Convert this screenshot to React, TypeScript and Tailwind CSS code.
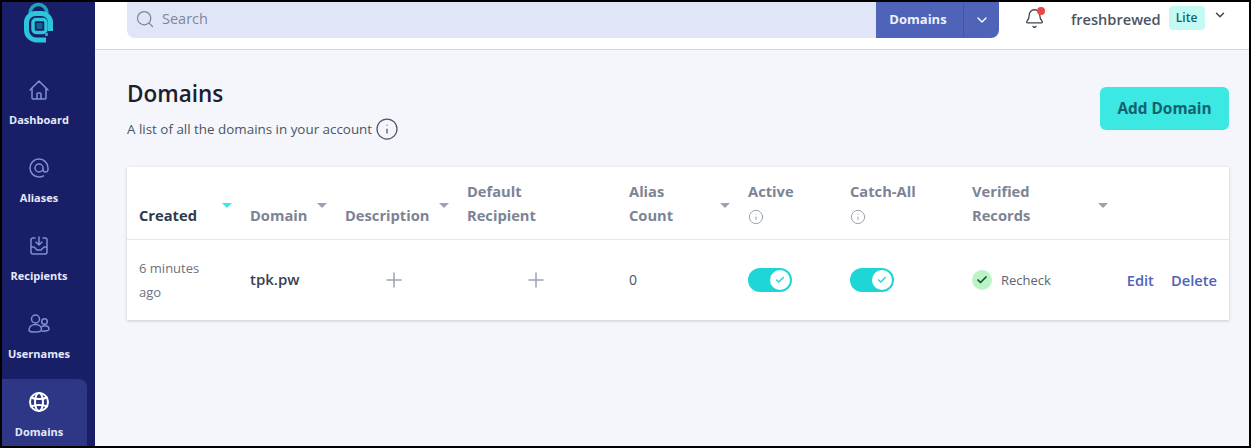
import { Bell, ChevronDown, Check, Plus, Search, Info } from "lucide-react";

const font = "font-['Open_Sans','Noto_Sans',sans-serif]";

function LogoMark() {
  return (
    <svg width="32" height="41" viewBox="0 0 32 41" fill="none">
      <path d="M7 11A8.5 8.5 0 0 1 24 11" stroke="#1aa5b8" strokeWidth="3.5" />
      <path d="M23 38H13A10 10 0 0 1 3.500 28V20A9 9 0 0 1 12.500 11.500h6A9 9 0 0 1 27.500 20v9" stroke="#2bc6da" strokeWidth="5" />
      <rect x="10" y="17.500" width="13" height="13" rx="3" stroke="#2bc6da" strokeWidth="3.5" />
      <path d="M22 32.500h3" stroke="#1aa5b8" strokeWidth="3" />
      <rect x="13.500" y="21" width="6" height="6" fill="#14648a" />
    </svg>
  );
}

function NavIcon({ name }: { name: string }) {
  const cls = name === "Domains" ? "text-white" : "text-[#7f8fd6]";
  const props = { width: 24, height: 24, viewBox: "0 0 24 24", fill: "none", stroke: "currentColor", strokeWidth: name === "Domains" ? 2 : 1.5, strokeLinecap: "round" as const, strokeLinejoin: "round" as const, className: cls };
  if (name === "Dashboard")
    return <svg {...props}><path d="M3 12l2-2m0 0l7-7 7 7M5 10v10a1 1 0 001 1h3m10-11l2 2m-2-2v10a1 1 0 01-1 1h-3m-6 0a1 1 0 001-1v-4a1 1 0 011-1h2a1 1 0 011 1v4a1 1 0 001 1m-6 0h6" /></svg>;
  if (name === "Aliases")
    return <svg {...props}><path d="M16 12a4 4 0 10-8 0 4 4 0 008 0zm0 0v1.5a2.5 2.5 0 005 0V12a9 9 0 10-9 9m4.5-1.206a8.959 8.959 0 01-4.5 1.207" /></svg>;
  if (name === "Recipients")
    return <svg {...props}><path d="M8 4H6a2 2 0 00-2 2v12a2 2 0 002 2h12a2 2 0 002-2V6a2 2 0 00-2-2h-2m-4-1v8m0 0l3-3m-3 3L9 8m-5 5h2.586a1 1 0 01.707.293l2.414 2.414a1 1 0 00.707.293h3.172a1 1 0 00.707-.293l2.414-2.414a1 1 0 01.707-.293H20" /></svg>;
  if (name === "Usernames")
    return (
      <svg {...props}>
        <circle cx="8.500" cy="7" r="4" />
        <circle cx="17.500" cy="9.500" r="2.800" />
        <path d="M2 18c0-3.500 3-5.500 6.500-5.500s6 2 6 5c0 2-2 2.500-6 2.500S2 20 2 18z" />
        <path d="M15 14.500c3-1.500 7-.5 7 2.500 0 1.800-2 2.200-6.500 2.200" />
      </svg>
    );
  return (
    <svg {...props}>
      <circle cx="12" cy="12" r="9" />
      <ellipse cx="12" cy="12" rx="4" ry="9" />
      <path d="M4 7.500c4 2 12 2 16 0M4 16.500c4-2 12-2 16 0" />
    </svg>
  );
}

function NavItem({ name, active }: { name: string; active?: boolean }) {
  return (
    <div className={`flex h-[78px] w-[85px] flex-col items-center pt-[11px] pr-[11px] ${active ? "rounded-tr-lg bg-[#2d3785]" : ""}`}>
      <NavIcon name={name} />
      <span className="mt-[10px] text-[11px] leading-4 font-bold whitespace-nowrap text-[#e5e9fb]">{name}</span>
    </div>
  );
}

function Sort({ on }: { on?: boolean }) {
  return (
    <span className={`mb-[19px] block h-0 w-0 border-x-[5px] border-t-[5px] border-x-transparent ${on ? "border-t-[#3be8e2]" : "border-t-[#9aa3b2]"}`} />
  );
}

function Toggle() {
  return (
    <span className="flex h-6 w-11 items-center justify-end rounded-full bg-[#1ed6d6] pr-[2px]">
      <span className="flex h-5 w-5 items-center justify-center rounded-full bg-white">
        <Check size={10} strokeWidth={3.5} className="text-[#1ed6d6]" />
      </span>
    </span>
  );
}

const cols = "grid-cols-[111px_95px_122px_162px_119px_102px_122px_1fr]";

export default function App() {
  return (
    <div className={`flex h-[448px] w-[1251px] overflow-hidden border-2 border-black bg-[#f5f6fb] ${font}`}>
      <aside className="flex w-[93px] shrink-0 flex-col bg-[#191f66]">
        <div className="h-[46px] shrink-0 pl-[21px]">
          <LogoMark />
        </div>
        <nav className="mt-[19px] flex flex-col">
          <NavItem name="Dashboard" />
          <NavItem name="Aliases" />
          <NavItem name="Recipients" />
          <NavItem name="Usernames" />
          <NavItem name="Domains" active />
        </nav>
      </aside>

      <div className="flex min-w-0 flex-1 flex-col">
        <header className="flex h-[48px] shrink-0 items-start border-b border-[#d5d7dc] bg-white pl-8">
          <div className="flex h-9 w-[872px] overflow-hidden rounded-b-lg">
            <div className="flex flex-1 items-center gap-[7px] bg-[#e0e6f8] pb-[2px] pl-2 text-[#7d8699]">
              <Search size={20} strokeWidth={1.5} />
              <span className="text-[14.5px] leading-5">Search</span>
            </div>
            <div className="flex w-[87px] items-center justify-center bg-[#4f63b8] pr-[3px] text-[13px] font-bold text-[#eef1fc]">Domains</div>
            <div className="flex w-9 items-center justify-center border-l border-[#4356a6] bg-[#4f63b8] text-white">
              <ChevronDown size={16} />
            </div>
          </div>
          <div className="relative mt-[6px] ml-[25px]">
            <Bell size={21} strokeWidth={1.5} className="text-[#3d4552]" />
            <span className="absolute -top-[1px] right-0 h-2 w-2 rounded-full bg-[#ef4444]" />
          </div>
          <span className="mt-[7px] ml-[26px] text-[14.6px] leading-5 font-semibold text-[#4b5563]">freshbrewed</span>
          <span className="mt-1 ml-2 flex h-6 w-9 items-center justify-center rounded bg-[#c3faf4] text-xs font-semibold text-[#14616d]">Lite</span>
          <ChevronDown size={14} strokeWidth={2.5} className="mt-[6px] ml-2 text-[#3d4552]" />
        </header>

        <main className="flex-1 pt-[30px] pr-5 pl-8">
          <div className="flex items-start justify-between">
            <div>
              <h1 className="text-[22.5px] leading-7 font-semibold text-[#1a202c]">Domains</h1>
              <div className="mt-[9px] flex items-center gap-[3px]">
                <span className="text-[13.4px] leading-5 text-[#4b5563]">A list of all the domains in your account</span>
                <Info size={24} strokeWidth={1.25} className="text-[#4b5563]" />
              </div>
            </div>
            <button className="mt-[7px] h-[43px] w-[129px] rounded-md bg-[#3be8e2] text-[15.4px] font-bold text-[#14616d]">Add Domain</button>
          </div>

          <div className="mt-[26px] w-[1102px] bg-white shadow-[0_1px_3px_rgba(0,0,0,0.18)]">
            <div className={`grid h-[73px] ${cols} border-b border-[#e5e7eb] pl-3 text-[14.7px] leading-6 font-bold text-[#7b8494]`}>
              <div className="flex items-end justify-between pr-[18px] pb-3">
                <span className="text-[#2f3a4a]">Created</span>
                <Sort on />
              </div>
              <div className="flex items-end justify-between pr-[18px] pb-3">
                <span>Domain</span>
                <Sort />
              </div>
              <div className="flex items-end justify-between pr-[18px] pb-3">
                <span>Description</span>
                <Sort />
              </div>
              <div className="flex items-end pb-3">
                <span>Default<br />Recipient</span>
              </div>
              <div className="flex items-end justify-between pr-[18px] pb-3">
                <span>Alias<br />Count</span>
                <Sort />
              </div>
              <div className="pt-3">
                <div>Active</div>
                <Info size={16} strokeWidth={1.5} className="mt-[6px] text-[#9aa3b2]" />
              </div>
              <div className="pt-3">
                <div>Catch-All</div>
                <Info size={16} strokeWidth={1.5} className="mt-[6px] text-[#9aa3b2]" />
              </div>
              <div className="flex w-[136px] items-end justify-between pb-3">
                <span>Verified<br />Records</span>
                <Sort />
              </div>
            </div>
            <div className={`grid h-[80px] ${cols} items-center pl-3 text-sm text-[#4b5563]`}>
              <div className="text-[13px] leading-6 text-[#6b7280]">6 minutes<br />ago</div>
              <div className="text-[15px] font-semibold text-[#374151]">tpk.pw</div>
              <div className="pl-[37px]"><Plus size={24} strokeWidth={1.5} className="text-[#9aa3b2]" /></div>
              <div className="pl-[57px]"><Plus size={24} strokeWidth={1.5} className="text-[#9aa3b2]" /></div>
              <div>0</div>
              <div><Toggle /></div>
              <div><Toggle /></div>
              <div className="flex items-center justify-between pr-3">
                <div className="flex items-center gap-[9px]">
                  <span className="flex h-5 w-5 items-center justify-center rounded-full bg-[#bbf2c6]">
                    <Check size={12} strokeWidth={3.5} className="text-[#14532d]" />
                  </span>
                  <span className="text-[13px] text-[#5c6470]">Recheck</span>
                </div>
                <div className="flex gap-[17px] text-[14.7px] font-semibold text-[#4f63b8]">
                  <span>Edit</span>
                  <span>Delete</span>
                </div>
              </div>
            </div>
          </div>
        </main>
      </div>
    </div>
  );
}
